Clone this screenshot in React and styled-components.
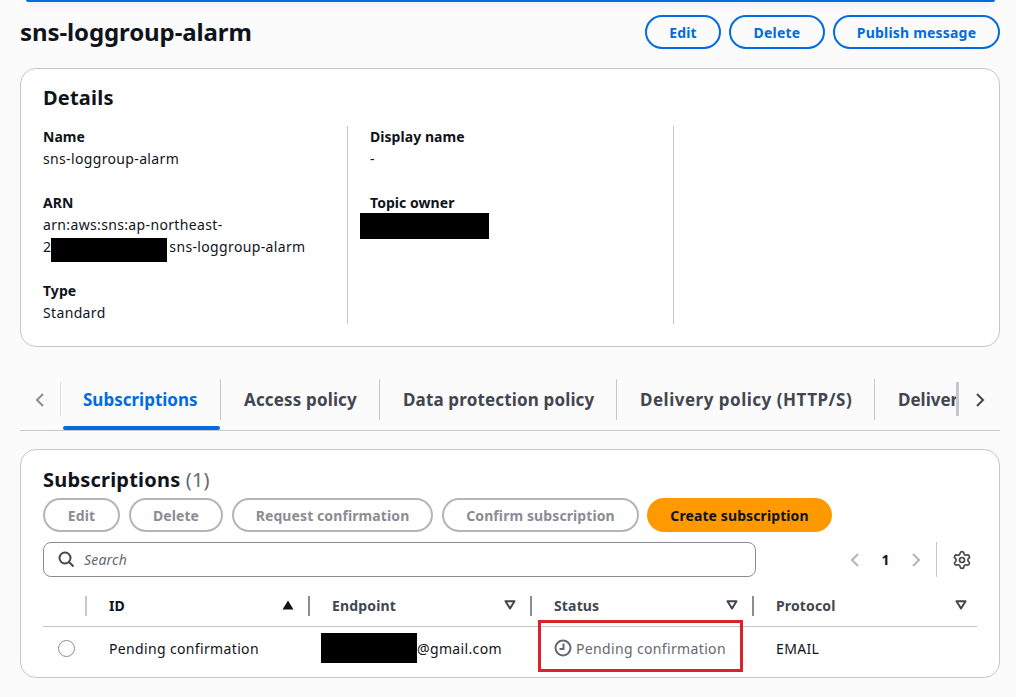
import React from 'react'
import styled, { createGlobalStyle } from 'styled-components'
import { Settings } from 'lucide-react'

const GlobalStyle = createGlobalStyle`
	html, body {
		margin: 0;
		padding: 0;
		background: #fbfbfc;
		font-family: 'Noto Sans', 'Open Sans', sans-serif;
		color: #0f141a;
	}
	* {
		box-sizing: border-box;
	}
`

const Page = styled.div`
	position: relative;
	width: 1016px;
	height: 697px;
	padding: 0 16px 0 20px;
	overflow: hidden;
`

const TopBar = styled.div`
	height: 2px;
	margin: 0 5px 0 6px;
	background: #006ce0;
	border-radius: 0 0 4px 4px;
	box-shadow: 0 2px 8px rgba(0, 7, 22, 0.14);
`

const HeaderRow = styled.div`
	display: flex;
	align-items: center;
	justify-content: space-between;
	height: 34px;
	margin-top: 13px;
`

const PageTitle = styled.h1`
	margin: 0;
	font-size: 24px;
	line-height: 34px;
	font-weight: 700;
	letter-spacing: -0.1px;
`

const ButtonRow = styled.div`
	display: flex;
	gap: 8px;
`

const PillButton = styled.button`
	height: 34px;
	width: ${props => props.width}px;
	padding: 0;
	border-radius: 17px;
	font-family: inherit;
	font-size: 14px;
	font-weight: 700;
	letter-spacing: ${props => (props.primary || props.muted ? '0.1px' : '0.2px')};
	background: ${props => (props.primary ? '#ff9900' : 'transparent')};
	color: ${props => (props.primary ? '#0f141a' : props.muted ? '#8c8c94' : '#006ce0')};
	border: 2px solid
		${props => (props.primary ? '#ff9900' : props.muted ? '#b4b4bb' : '#006ce0')};
`

const Card = styled.section`
	background: #fff;
	border: 1px solid #c6c6cd;
	border-radius: 16px;
	margin-top: ${props => props.top}px;
	height: ${props => props.height}px;
	padding: ${props => props.padding};
`

const CardTitle = styled.h2`
	margin: 0;
	font-size: 20px;
	line-height: 24px;
	font-weight: 700;
	letter-spacing: 0.2px;
`

const Count = styled.span`
	font-weight: 400;
	color: #656871;
`

const DetailColumns = styled.div`
	display: grid;
	grid-template-columns: 304px 326px 1fr;
	grid-template-rows: 198px;
	margin-top: 16px;
`

const DetailColumn = styled.div`
	display: flex;
	flex-direction: column;
	gap: 22px;
	padding-left: ${props => (props.first ? '0' : '22px')};
	border-left: ${props => (props.first ? 'none' : '1px solid #c6c6cd')};
`

const Field = styled.div`
	font-size: 14px;
	line-height: 22px;
`

const Label = styled.div`
	font-weight: 700;
	letter-spacing: 0.05px;
`

const Value = styled.div`
	letter-spacing: 0.35px;
`

const Redacted = styled.span`
	display: inline-block;
	flex: none;
	background: #000;
	width: ${props => props.width}px;
	height: ${props => props.height}px;
`

const ArnRedacted = styled(Redacted)`
	vertical-align: top;
	margin: 2px 2px -4px 0;
`

const OwnerRedacted = styled(Redacted)`
	display: block;
	margin: -1px 0 0 -10px;
`

const TabsBar = styled.div`
	display: flex;
	align-items: stretch;
	height: 53px;
	margin-top: 31px;
	border-bottom: 1px solid #c6c6cd;
`

const ScrollButton = styled.div`
	flex: none;
	display: flex;
	align-items: center;
	justify-content: center;
	width: ${props => props.width}px;
	height: 44px;
	color: ${props => props.color};
`

const TabSlot = styled.div`
	position: relative;
	display: flex;
	margin-top: 1px;
	overflow: hidden;
	width: 899px;
	height: 51px;
`

const Tab = styled.div`
	flex: none;
	display: flex;
	align-items: center;
	width: ${props => props.width}px;
	height: 41px;
	padding-left: ${props => props.pad}px;
	font-size: 17px;
	font-weight: 700;
	white-space: nowrap;
	letter-spacing: ${props => props.spacing || 0}px;
	color: ${props => (props.active ? '#006ce0' : '#424650')};
	border-right: ${props => (props.last ? 'none' : '1px solid #c6c6cd')};
`

const TabUnderline = styled.div`
	position: absolute;
	left: 3px;
	top: 47px;
	width: 157px;
	height: 4px;
	border-radius: 2px;
	background: #006ce0;
`

const TabDivider = styled.div`
	position: absolute;
	left: 0;
	top: 3px;
	width: 1px;
	height: 34px;
	background: #dcdce1;
`

const TabFade = styled.div`
	position: absolute;
	right: 0;
	top: 3px;
	width: 3px;
	height: 34px;
	background: #c6c6cd;
`

const Toolbar = styled.div`
	display: flex;
	gap: 9px;
	margin-top: 6px;
`

const CreateSlot = styled.div`
	margin-left: -1px;
`

const SearchRow = styled.div`
	display: flex;
	align-items: center;
	margin-top: 10px;
`

const SearchBox = styled.div`
	flex: none;
	display: flex;
	align-items: center;
	gap: 9px;
	width: 713px;
	height: 35px;
	padding-left: 14px;
	border: 1px solid #8c8c94;
	border-radius: 8px;
	font-size: 14px;
	font-style: italic;
	letter-spacing: 0.2px;
	color: #656871;
`

const Pagination = styled.div`
	display: flex;
	align-items: center;
	height: 35px;
	margin-left: 89px;
`

const PageNumber = styled.span`
	width: 41px;
	text-align: center;
	font-size: 14px;
	font-weight: 700;
`

const PagerDivider = styled.div`
	width: 1px;
	height: 35px;
	margin: 0 15px 0 10px;
	background: #c6c6cd;
`

const TableGrid = styled.div`
	display: grid;
	grid-template-columns: 42px 223px 222px 222px 225px;
	width: 934px;
	margin-top: 19px;
`

const HeaderCell = styled.div`
	display: flex;
	align-items: center;
	justify-content: space-between;
	height: 31px;
	padding: 0 ${props => props.right || 14}px 12px 24px;
	font-size: 14px;
	font-weight: 700;
	border-bottom: 1px solid #c6c6cd;
	color: ${props => (props.sorted ? '#0f141a' : '#424650')};
`

const HeaderLabel = styled.span`
	letter-spacing: 0.15px;
`

const HeaderEdge = styled(HeaderCell)`
	position: relative;
	&::before {
		content: '';
		position: absolute;
		left: 0;
		top: 0;
		width: 2px;
		height: 20px;
		background: ${props => props.edge || '#8c8c94'};
	}
`

const BodyCell = styled.div`
	display: flex;
	align-items: center;
	gap: ${props => props.gap || 0}px;
	height: 42px;
	padding-left: ${props => props.left}px;
	font-size: 14px;
	letter-spacing: 0.35px;
	white-space: nowrap;
	color: ${props => props.color || '#0f141a'};
`

const Radio = styled.div`
	width: 17px;
	height: 17px;
	border: 1px solid #8c8c94;
	border-radius: 50%;
	background: #fff;
`

const Highlight = styled.div`
	position: absolute;
	left: 538px;
	top: 620px;
	width: 205px;
	height: 52px;
	border: 3px solid #d8232a;
	pointer-events: none;
`

const Chevron = ({ dir, size = 16, stroke = 2 }) => (
	<svg width={size} height={size} viewBox="0 0 16 16" fill="none">
		<path
			d={dir === 'left' ? 'M11 2 L5 8 L11 14' : 'M5 2 L11 8 L5 14'}
			stroke="currentColor"
			strokeWidth={stroke}
		/>
	</svg>
)

const SortDown = () => (
	<svg width="12" height="10" viewBox="0 0 12 10" fill="none">
		<path d="M1.5 1.2 H10.5 L6 8.5 Z" stroke="#424650" strokeWidth="2" strokeLinejoin="round" />
	</svg>
)

const SortUp = () => (
	<svg width="12" height="10" viewBox="0 0 12 10">
		<path d="M0.5 9.5 H11.5 L6 0.5 Z" fill="#0f141a" />
	</svg>
)

const SearchIcon = () => (
	<svg width="17" height="17" viewBox="0 0 17 17" fill="none">
		<circle cx="7" cy="7" r="5.5" stroke="#424650" strokeWidth="2" />
		<path d="M11 11 L15.5 15.5" stroke="#424650" strokeWidth="2" />
	</svg>
)

const ClockIcon = () => (
	<svg width="18" height="18" viewBox="0 0 18 18" fill="none">
		<circle cx="9" cy="9" r="7.5" stroke="#656871" strokeWidth="2" />
		<path d="M9.5 4.5 V10 H5.5" stroke="#656871" strokeWidth="2" />
	</svg>
)

const tabs = [
	{ label: 'Subscriptions', width: 161, pad: 23, active: true },
	{ label: 'Access policy', width: 159, pad: 23, spacing: 0.15 },
	{ label: 'Data protection policy', width: 237, pad: 23, spacing: 0.15 },
	{ label: 'Delivery policy (HTTP/S)', width: 258, pad: 23, spacing: 0.5 },
	{ label: 'Delivery status logging', width: 200, pad: 23, last: true },
]

const App = () => (
	<>
		<GlobalStyle />
		<Page>
			<TopBar />
			<HeaderRow>
				<PageTitle>sns-loggroup-alarm</PageTitle>
				<ButtonRow>
					<PillButton width={76}>Edit</PillButton>
					<PillButton width={96}>Delete</PillButton>
					<PillButton width={167}>Publish message</PillButton>
				</ButtonRow>
			</HeaderRow>

			<Card top={19} height={279} padding="17px 22px">
				<CardTitle>Details</CardTitle>
				<DetailColumns>
					<DetailColumn first>
						<Field>
							<Label>Name</Label>
							<Value>sns-loggroup-alarm</Value>
						</Field>
						<Field>
							<Label>ARN</Label>
							<Value>arn:aws:sns:ap-northeast-</Value>
							<Value>
								2<ArnRedacted width={116} height={24} />
								sns-loggroup-alarm
							</Value>
						</Field>
						<Field>
							<Label>Type</Label>
							<Value>Standard</Value>
						</Field>
					</DetailColumn>
					<DetailColumn>
						<Field>
							<Label>Display name</Label>
							<Value>-</Value>
						</Field>
						<Field>
							<Label>Topic owner</Label>
							<OwnerRedacted width={129} height={26} />
						</Field>
					</DetailColumn>
					<DetailColumn />
				</DetailColumns>
			</Card>

			<TabsBar>
				<ScrollButton width={40} color="#8c8c94">
					<Chevron dir="left" />
				</ScrollButton>
				<TabSlot>
					<TabDivider />
					{tabs.map(tab => (
						<Tab key={tab.label} {...tab}>
							{tab.label}
						</Tab>
					))}
					<TabUnderline />
					<TabFade />
				</TabSlot>
				<ScrollButton width={41} color="#424650">
					<Chevron dir="right" />
				</ScrollButton>
			</TabsBar>

			<Card top={18} height={229} padding="18px 22px 0">
				<CardTitle>
					Subscriptions <Count>(1)</Count>
				</CardTitle>
				<Toolbar>
					<PillButton muted width={77}>Edit</PillButton>
					<PillButton muted width={94}>Delete</PillButton>
					<PillButton muted width={201}>Request confirmation</PillButton>
					<PillButton muted width={197}>Confirm subscription</PillButton>
					<CreateSlot>
						<PillButton primary width={185}>Create subscription</PillButton>
					</CreateSlot>
				</Toolbar>
				<SearchRow>
					<SearchBox>
						<SearchIcon />
						Search
					</SearchBox>
					<Pagination>
						<ScrollButton width={20} color="#b4b4bb">
							<Chevron dir="left" />
						</ScrollButton>
						<PageNumber>1</PageNumber>
						<ScrollButton width={20} color="#b4b4bb">
							<Chevron dir="right" />
						</ScrollButton>
						<PagerDivider />
						<Settings size={20} strokeWidth={2} color="#424650" />
					</Pagination>
				</SearchRow>
				<TableGrid>
					<HeaderCell />
					<HeaderEdge sorted edge="#c6c6cd">
						<HeaderLabel>ID</HeaderLabel>
						<SortUp />
					</HeaderEdge>
					<HeaderEdge>
						<HeaderLabel>Endpoint</HeaderLabel>
						<SortDown />
					</HeaderEdge>
					<HeaderEdge>
						<HeaderLabel>Status</HeaderLabel>
						<SortDown />
					</HeaderEdge>
					<HeaderEdge right={10}>
						<HeaderLabel>Protocol</HeaderLabel>
						<SortDown />
					</HeaderEdge>
					<BodyCell left={15}>
						<Radio />
					</BodyCell>
					<BodyCell left={24}>Pending confirmation</BodyCell>
					<BodyCell left={13}>
						<Redacted width={96} height={30} />
						@gmail.com
					</BodyCell>
					<BodyCell left={24} gap={4} color="#656871">
						<ClockIcon />
						Pending confirmation
					</BodyCell>
					<BodyCell left={24}>EMAIL</BodyCell>
				</TableGrid>
			</Card>
			<Highlight />
		</Page>
	</>
)

export default App
